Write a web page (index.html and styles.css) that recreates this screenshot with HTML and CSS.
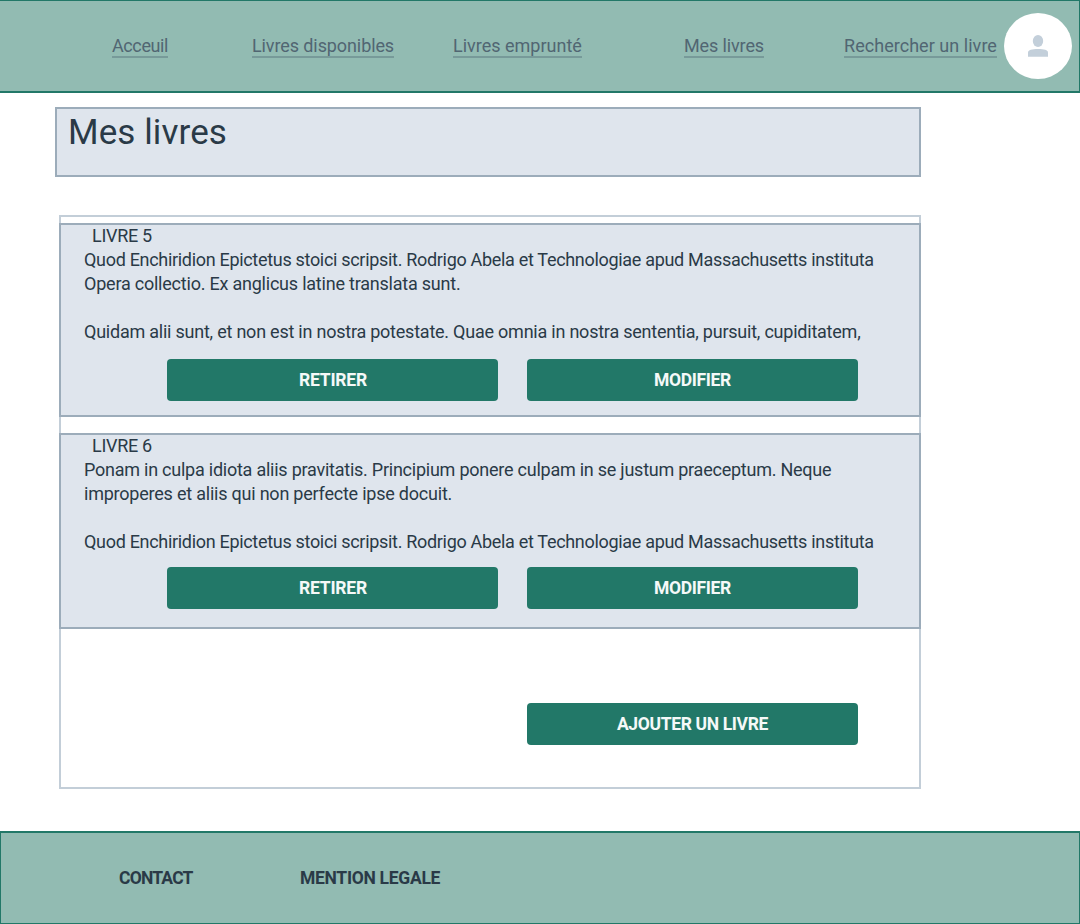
FILE: index.html
```html
<!DOCTYPE html>
<html lang="fr">
<head>
<meta charset="utf-8">
<title>Mes livres</title>
<link rel="stylesheet" href="styles.css">
</head>
<body>
<header class="header">
  <nav class="nav">
    <a class="link link-home">Acceuil</a>
    <a class="link link-available">Livres disponibles</a>
    <a class="link link-borrowed">Livres emprunté</a>
    <a class="link link-mine">Mes livres</a>
    <a class="link link-search">Rechercher un livre</a>
  </nav>
  <div class="avatar">
    <svg width="20" height="22" viewBox="0 0 20 22" fill="#c3cfda"><ellipse cx="10" cy="6" rx="5.2" ry="6"/><path d="M0 21.7V17.5C0 15.2 4 14.1 10 14.1S20 15.2 20 17.5V21.7Z"/></svg>
  </div>
</header>
<main class="main">
  <h1 class="title">Mes livres</h1>
  <section class="list">
    <article class="card">
      <h2 class="name">LIVRE 5</h2>
      <p class="text">
        <span class="line l1">Quod Enchiridion Epictetus stoici scripsit. Rodrigo Abela et Technologiae apud Massachusetts instituta</span>
        <span class="line l2">Opera collectio. Ex anglicus latine translata sunt.</span>
      </p>
      <p class="text"><span class="line l3">Quidam alii sunt, et non est in nostra potestate. Quae omnia in nostra sententia, pursuit, cupiditatem,</span></p>
      <div class="actions">
        <button class="button retirer">RETIRER</button>
        <button class="button modifier">MODIFIER</button>
      </div>
    </article>
    <article class="card card-second">
      <h2 class="name">LIVRE 6</h2>
      <p class="text">
        <span class="line l4">Ponam in culpa idiota aliis pravitatis. Principium ponere culpam in se justum praeceptum. Neque</span>
        <span class="line l5">improperes et aliis qui non perfecte ipse docuit.</span>
      </p>
      <p class="text"><span class="line l1">Quod Enchiridion Epictetus stoici scripsit. Rodrigo Abela et Technologiae apud Massachusetts instituta</span></p>
      <div class="actions">
        <button class="button retirer">RETIRER</button>
        <button class="button modifier">MODIFIER</button>
      </div>
    </article>
    <button class="button add">AJOUTER UN LIVRE</button>
  </section>
</main>
<footer class="footer">
  <a class="contact">CONTACT</a>
  <a class="legal">MENTION LEGALE</a>
</footer>
</body>
</html>
```
FILE: styles.css
```css
* { box-sizing: border-box; }
body {
  margin: 0;
  height: 924px;
  display: flex;
  flex-direction: column;
  background: #fff;
  color: #2a3a47;
  font: 18px/24px Roboto, "Liberation Sans", sans-serif;
}
h1, h2, p { margin: 0; font-weight: 400; }

.header {
  height: 93px;
  display: flex;
  align-items: center;
  padding-left: 112px;
  background: #92bbb2;
  border: solid #227868;
  border-width: 1px 1px 2px 0;
}
.nav { display: flex; }
.link {
  height: 24px;
  line-height: 23px;
  color: #516672;
  border-bottom: 2px solid #779a99;
  white-space: nowrap;
}
.link-home { width: 56px; letter-spacing: -0.4px; }
.link-available { width: 142px; margin-left: 84px; letter-spacing: -0.1px; }
.link-borrowed { width: 129px; margin-left: 59px; }
.link-mine { width: 80px; margin-left: 102px; letter-spacing: -0.13px; }
.link-search { width: 153px; margin-left: 80px; letter-spacing: 0.04px; }
.avatar {
  width: 68px;
  height: 66px;
  margin-left: 7px;
  border-radius: 50%;
  background: #fff;
  display: grid;
  place-items: center;
}

.main { width: 921px; flex: 1; }
.title {
  height: 70px;
  margin: 14px 0 0 55px;
  padding: 2px 0 0 11px;
  background: #dfe5ed;
  border: 2px solid #9cacba;
  font-size: 35px;
  line-height: 44px;
  letter-spacing: 0.1px;
}
.list {
  height: 574px;
  margin: 38px 0 0 59px;
  border: 2px solid #c3ced8;
  padding-top: 6px;
}
.card {
  height: 194px;
  margin: 0 -2px;
  padding-left: 23px;
  background: #dfe5ed;
  border: 2px solid #9cacba;
}
.card-second { height: 196px; margin-top: 16px; }
.name {
  margin: -1px 0 0 8px;
  font-size: 18px;
  letter-spacing: -0.3px;
}
.text + .text { margin-top: 24px; }
.line { display: block; white-space: nowrap; }
.l1 { letter-spacing: -0.31px; }
.l2 { letter-spacing: -0.22px; }
.l3 { letter-spacing: -0.23px; }
.l4 { letter-spacing: -0.24px; }
.l5 { letter-spacing: -0.22px; }
.actions {
  display: flex;
  gap: 29px;
  margin: 15px 0 0 83px;
}
.card-second .actions { margin-top: 13px; }
.button {
  width: 331px;
  height: 42px;
  padding: 0;
  border: 0;
  border-radius: 4px;
  background: #227868;
  color: #f5f9f8;
  font: 700 17.5px/42px Roboto, "Liberation Sans", sans-serif;
}
.retirer { letter-spacing: -0.2px; text-indent: 1px; }
.modifier { letter-spacing: -0.35px; }
.add {
  display: block;
  margin: 74px 0 0 466px;
  letter-spacing: -0.35px;
}

.footer {
  height: 93px;
  display: flex;
  align-items: center;
  padding-left: 118px;
  background: #92bbb2;
  border: 1px solid #227868;
  border-top-width: 2px;
  font-weight: 700;
  font-size: 17.5px;
  white-space: nowrap;
}
.contact { width: 181px; letter-spacing: -0.8px; }
.legal { letter-spacing: -0.3px; }
```
